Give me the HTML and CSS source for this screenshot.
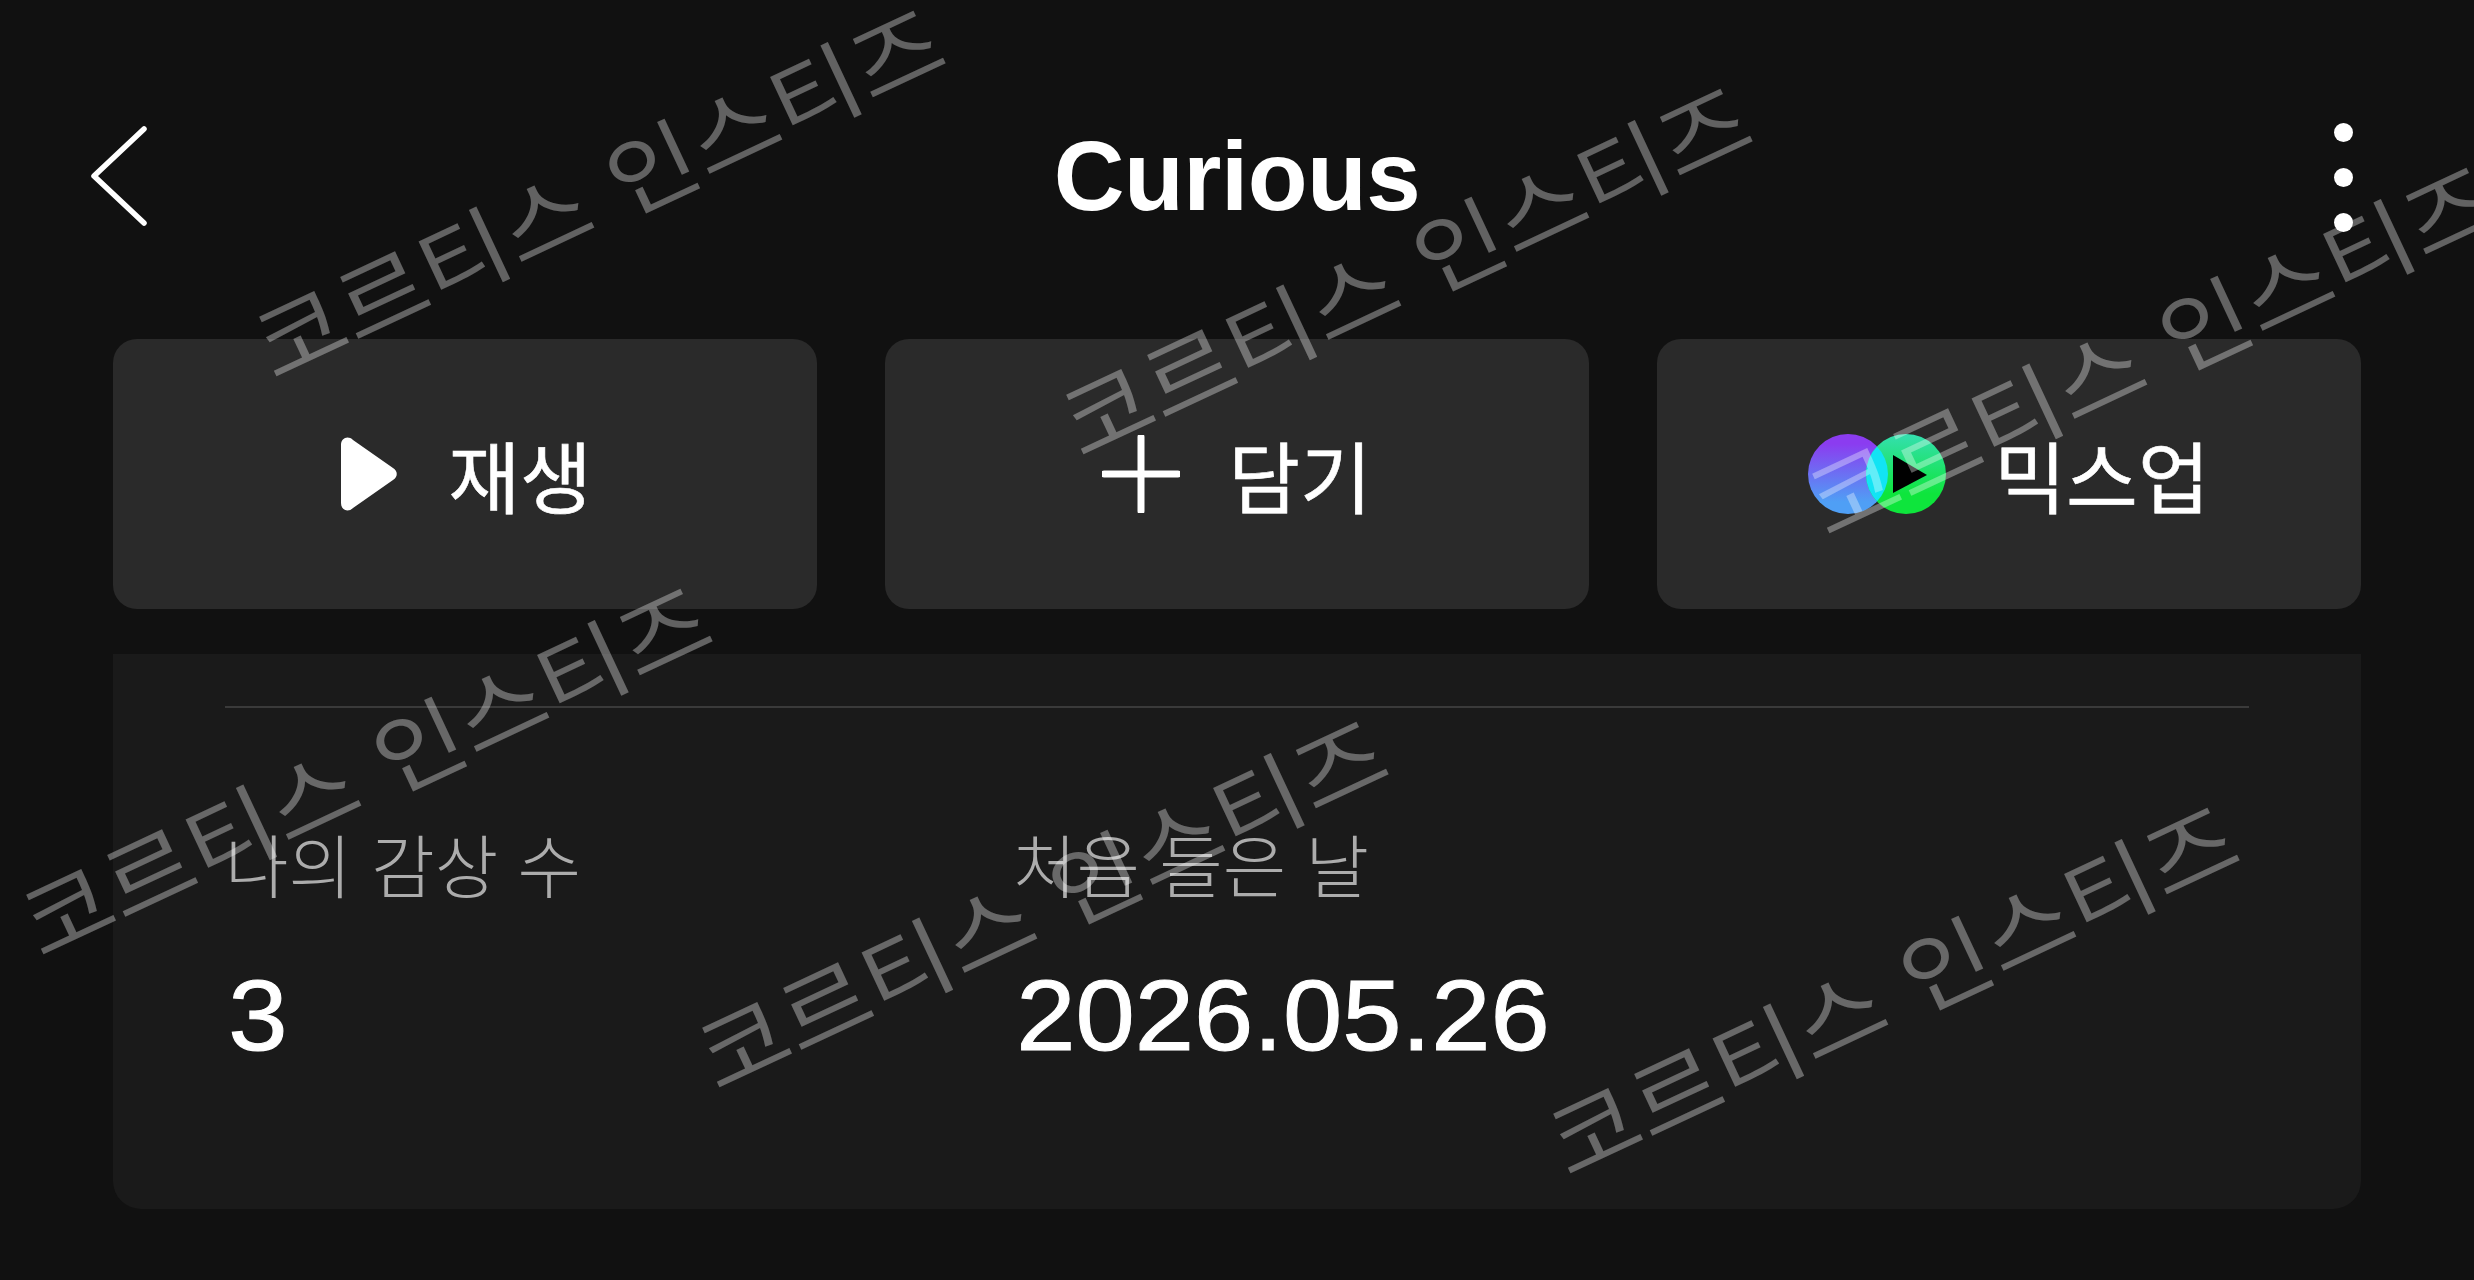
FILE: index.html
```html
<!DOCTYPE html>
<html lang="ko">
<head>
<meta charset="utf-8">
<title>Curious</title>
<link rel="stylesheet" href="styles.css">
</head>
<body>
<main class="page">
  <header class="header">
    <button class="icon-btn back" aria-label="뒤로">
      <svg class="chevron" viewBox="0 0 60 104" width="60" height="104"><path d="M54 5 4 52l50 47" fill="none" stroke="#fff" stroke-width="5.5" stroke-linecap="round" stroke-linejoin="round"/></svg>
    </button>
    <h1 class="title">Curious</h1>
    <button class="icon-btn more" aria-label="더보기"><span class="dot"></span><span class="dot"></span><span class="dot"></span></button>
  </header>

  <section class="actions">
    <button class="action action-play">
      <svg class="ic-play" viewBox="0 0 56 74" width="56" height="74"><path d="M0 8C0 1 7-2 12 3l40 28c5 3 5 9 0 12L12 71C7 76 0 73 0 66Z" fill="#fff"/></svg>
      <span>재생</span>
    </button>
    <button class="action">
      <svg class="ic-plus" viewBox="0 0 78 78" width="78" height="78"><path d="M39 2v74M2 39h74" fill="none" stroke="#fff" stroke-width="7" stroke-linecap="round"/></svg>
      <span>담기</span>
    </button>
    <button class="action">
      <svg class="ic-mix" viewBox="0 0 138 80" width="138" height="80">
        <defs>
          <linearGradient id="gp" x1="0" y1="0" x2="0" y2="1"><stop offset=".12" stop-color="#8b3cf0"/><stop offset=".85" stop-color="#4f9ff5"/></linearGradient>
          <linearGradient id="gg" x1="0" y1="0" x2="0" y2="1"><stop offset="0" stop-color="#35dfb0"/><stop offset=".75" stop-color="#0ee53c"/></linearGradient>
          <clipPath id="cp"><circle cx="40" cy="40" r="40"/></clipPath>
        </defs>
        <circle cx="40" cy="40" r="40" fill="url(#gp)"/>
        <circle cx="98" cy="40" r="40" fill="url(#gg)"/>
        <circle cx="98" cy="40" r="40" fill="#12e4f4" clip-path="url(#cp)"/>
        <path d="M85 21 119 41 85 59Z" fill="#000"/>
      </svg>
      <span>믹스업</span>
    </button>
  </section>

  <section class="panel">
    <hr class="rule">
    <div class="stats">
      <div class="stat stat-count">
        <div class="label">나의 감상 수</div>
        <div class="value">3</div>
      </div>
      <div class="stat">
        <div class="label">처음 들은 날</div>
        <div class="value">2026.05.26</div>
      </div>
    </div>
  </section>
</main>

<div class="marks" aria-hidden="true">
  <span class="mark m1">코르티스 인스티즈</span>
  <span class="mark m2">코르티스 인스티즈</span>
  <span class="mark m3">코르티스 인스티즈</span>
  <span class="mark m4">코르티스 인스티즈</span>
  <span class="mark m5">코르티스 인스티즈</span>
  <span class="mark m6">코르티스 인스티즈</span>
</div>
</body>
</html>
```
FILE: styles.css
```css
* { box-sizing: border-box; }
html, body { margin: 0; height: 100%; }
body {
  background: #111111;
  color: #fff;
  font-family: "Liberation Sans", "Noto Sans CJK KR", sans-serif;
  overflow: hidden;
  position: relative;
}
.page { width: 2474px; height: 1280px; }
.header {
  height: 339px;
  padding: 12px 112px 0 90px;
  display: grid;
  grid-template-columns: 1fr auto 1fr;
  align-items: center;
}
.icon-btn { background: none; border: 0; padding: 0; display: flex; width: 272px; }
.back { justify-self: start; }
.chevron { display: block; }
.title { margin: 0; font-size: 98px; font-weight: 700; line-height: 1; letter-spacing: -.5px; transform: translateX(11px); }
.more { justify-self: end; flex-direction: column; align-items: flex-end; gap: 26px; margin-right: 9px; padding-top: 4px; }
.dot { width: 19px; height: 19px; border-radius: 50%; background: #fff; }

.actions {
  padding: 0 113px;
  display: grid;
  grid-template-columns: repeat(3, 1fr);
  gap: 68px;
}
.action {
  height: 270px;
  background: #2a2a2a;
  border: 0;
  border-radius: 24px;
  color: #fff;
  font-family: "Noto Sans CJK KR", sans-serif;
  font-size: 78px;
  font-weight: 400;
  -webkit-text-stroke: .6px #fff;
  display: flex;
  align-items: center;
  justify-content: center;
  gap: 48px;
  padding: 0;
}
.action-play { padding-left: 3px; }
.ic-play { margin-right: 3px; }
.panel {
  margin: 45px 113px 0;
  height: 555px;
  background: #1a1a1a;
  border-radius: 0 0 28px 28px;
  padding: 52px 112px 0;
}
.rule { margin: 0; border: 0; height: 2px; background: #3a3a3a; }
.stats { display: flex; padding-top: 105px; }
.stat-count { width: 788px; }
.label {
  font-family: "Noto Sans CJK KR", sans-serif;
  font-size: 69px;
  font-weight: 300;
  line-height: 100px;
  color: #acacac;
}
.value {
  margin-top: 42px;
  padding-left: 3px;
  font-size: 100px;
  line-height: 120px;
  font-weight: 400;
  -webkit-text-stroke: 1px #fff;
  transform: scaleX(1.066);
  transform-origin: 0 50%;
}

.marks { position: absolute; inset: 0; pointer-events: none; overflow: hidden; }
.mark {
  position: absolute;
  font-family: "Noto Sans CJK KR", sans-serif;
  font-size: 98px;
  font-weight: 400;
  line-height: 1;
  white-space: nowrap;
  color: rgba(255, 255, 255, .34);
  transform-origin: 0 100%;
  transform: rotate(-25.1deg) scaleY(.9);
}
.m1 { left: 276px; top: 289px; }
.m2 { left: 1083px; top: 367px; }
.m3 { left: 1829px; top: 446px; }
.m4 { left: 43px; top: 867px; }
.m5 { left: 719px; top: 1000px; }
.m6 { left: 1570px; top: 1086px; }
```
